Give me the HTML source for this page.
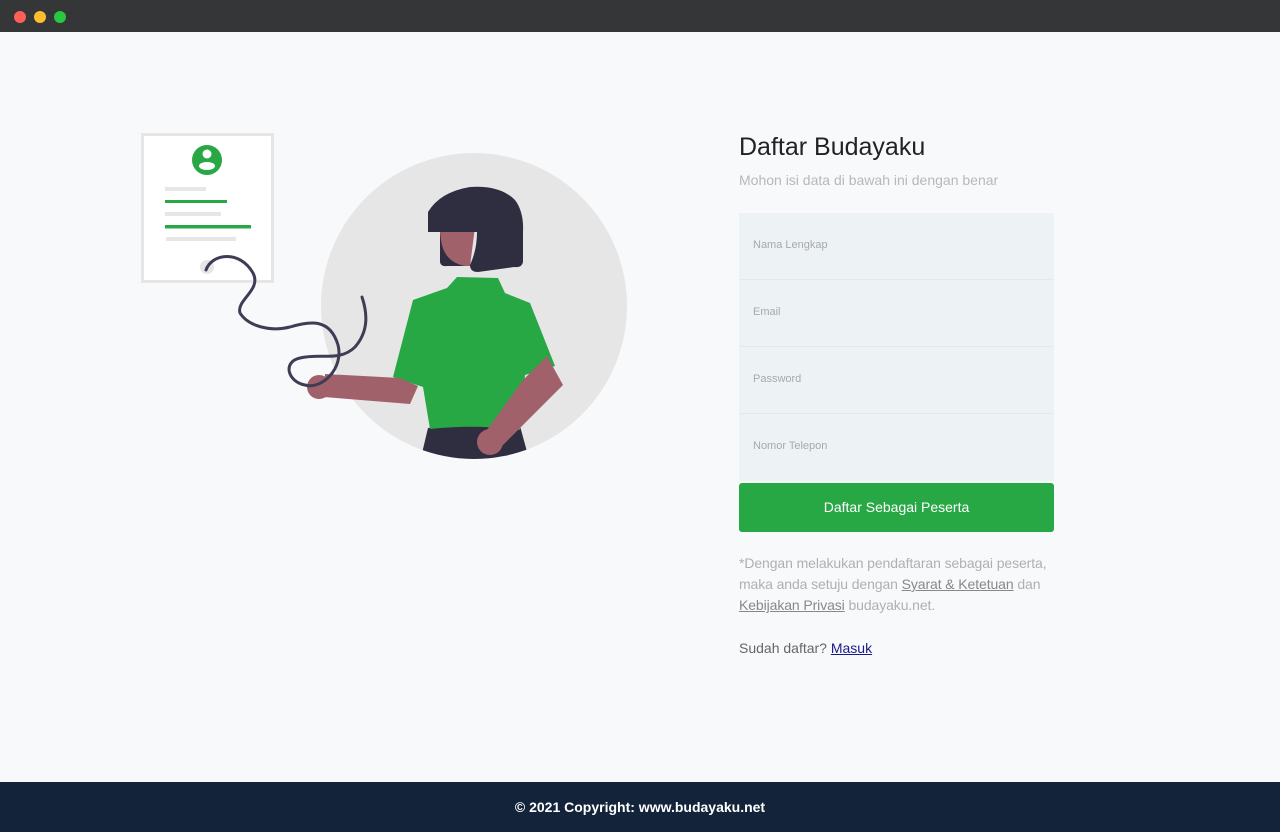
<!DOCTYPE html>
<html><head><meta charset="utf-8"><style>
*{margin:0;padding:0;box-sizing:border-box}
body{width:1280px;height:832px;overflow:hidden;background:#f8f9fb;font-family:"Liberation Sans",sans-serif;position:relative}
.bar{position:absolute;left:0;top:0;width:1280px;height:32px;background:#353638}
.dot{position:absolute;top:11px;width:12px;height:12px;border-radius:50%}
.form{position:absolute;left:739px;top:0;width:315px}
h1{position:absolute;top:133px;left:0;font-size:25px;font-weight:normal;color:#222;white-space:nowrap}
.sub{position:absolute;top:172px;left:0;font-size:14px;color:#b8b8b8;white-space:nowrap}
.fields{position:absolute;top:213px;left:0;width:315px;height:268px;background:#edf2f4}
.f{height:67px;border-bottom:1px solid #e3e8ea;font-size:11px;color:#a9a9a9;padding:26px 0 0 14px}
.f:last-child{border:none}
.btn{position:absolute;top:483px;left:0;width:315px;height:49px;background:#28a745;border-radius:3px;color:#fff;font-size:14px;text-align:center;line-height:49px}
.p{position:absolute;top:553px;left:0;font-size:14px;line-height:21px;color:#b0b0b0;white-space:nowrap;letter-spacing:-0.1px}
.p u{color:#888}
.s{position:absolute;top:640px;left:0;font-size:14px;color:#666;white-space:nowrap}
.s u{color:#1a1a8a}
.foot{position:absolute;left:0;top:782px;width:1280px;height:50px;background:#12233a;color:#fff;font-size:14px;font-weight:bold;text-align:center;line-height:50px}
</style></head><body>
<div class="bar"><div class="dot" style="left:14px;background:#fe5f57"></div><div class="dot" style="left:34px;background:#febc2e"></div><div class="dot" style="left:54px;background:#28c840"></div></div>
<svg style="position:absolute;left:0;top:0" width="700" height="500">
<defs><clipPath id="c"><circle cx="474" cy="306" r="153"/></clipPath></defs>
<rect x="142.5" y="134.5" width="130" height="147" fill="#fff" stroke="#e6e6e6" stroke-width="3"/>
<circle cx="207" cy="160" r="15" fill="#28a745"/>
<circle cx="207" cy="154" r="4.5" fill="#fff"/>
<ellipse cx="207" cy="166" rx="8" ry="4" fill="#fff"/>
<rect x="165" y="187" width="41" height="4" fill="#e6e6e6"/>
<rect x="165" y="200" width="62" height="3" fill="#28a745"/>
<rect x="165" y="212" width="56" height="4" fill="#e6e6e6"/>
<rect x="165" y="225" width="86" height="3.5" fill="#28a745"/>
<rect x="166" y="237" width="70" height="4" fill="#e6e6e6"/>
<circle cx="207" cy="267" r="7" fill="#e6e6e6"/>
<circle cx="474" cy="306" r="153" fill="#e6e6e6"/>
<g clip-path="url(#c)"><path d="M428 428 Q475 422 520 426 L532 470 L418 470 Z" fill="#2f2e41"/></g>
<path d="M413 300 L447 288 L457 277 L498 278 L505 293 L530 303 L555 366 L525 375 L520 430 Q475 424 430 429 L423 387 L393 377 Z" fill="#28a745"/>
<path d="M325 374 L400 378 L418 386 L410 404 L324 397 Z" fill="#a0616a"/>
<circle cx="319" cy="387" r="12" fill="#a0616a"/>
<path d="M547 356 L563 385 L500 448 L484 434 L523 380 Z" fill="#a0616a"/>
<circle cx="490" cy="442" r="13" fill="#a0616a"/>
<path d="M440 228 L440 262 Q441 267 447 266 L470 266 L475 227 Z" fill="#a0616a"/>
<path d="M428 232 L428 212 Q440 192 470 187 Q500 185 515 200 Q524 212 523 232 L523 262 Q522 268 514 267 L478 272 Q470 272 470 265 Q477 250 477 232 Z" fill="#2f2e41"/>
<path d="M440 232 L440 262 Q441 267 447 266 L465 266 Q444 262 441 240 Z" fill="#2f2e41"/>
<path d="M206 270 C212 253 240 250 253 273 C262 290 236 300 240 313 C248 326 270 332 290 327 C310 321 330 318 338 345 C344 368 322 390 305 385 C288 382 282 362 300 358 C320 353 340 362 355 347 C368 332 368 315 362 297" fill="none" stroke="#3f3d56" stroke-width="3" stroke-linecap="round"/>
</svg>
<div class="form">
<h1>Daftar Budayaku</h1>
<div class="sub">Mohon isi data di bawah ini dengan benar</div>
<div class="fields"><div class="f">Nama Lengkap</div><div class="f">Email</div><div class="f">Password</div><div class="f">Nomor Telepon</div></div>
<div class="btn">Daftar Sebagai Peserta</div>
<div class="p">*Dengan melakukan pendaftaran sebagai peserta,<br>maka anda setuju dengan <u>Syarat &amp; Ketetuan</u> dan<br><u>Kebijakan Privasi</u> budayaku.net.</div>
<div class="s">Sudah daftar? <u>Masuk</u></div>
</div>
<div class="foot">© 2021 Copyright: www.budayaku.net</div>
</body></html>
